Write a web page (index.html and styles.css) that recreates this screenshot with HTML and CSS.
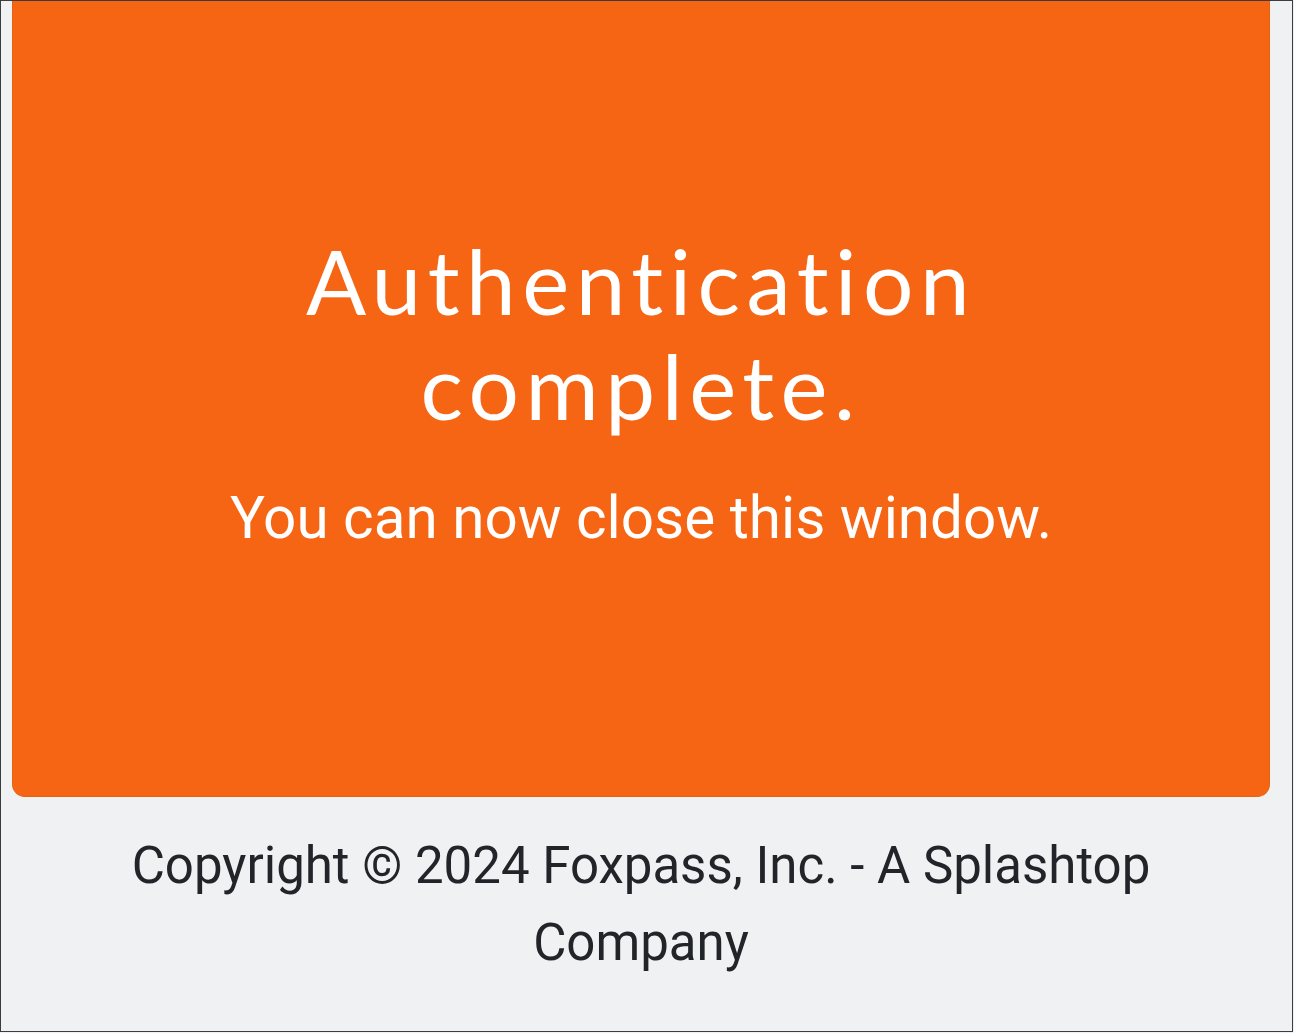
FILE: index.html
```html
<!DOCTYPE html>
<html lang="en">
<head>
<meta charset="utf-8">
<title>Authentication complete</title>
<link rel="stylesheet" href="styles.css">
</head>
<body>
<div class="frame">
  <div class="card">
    <h1 class="title">Authentication<br>complete.</h1>
    <p class="subtitle">You can now close this window.</p>
  </div>
  <footer class="footer">Copyright © 2024 Foxpass, Inc. - A Splashtop Company</footer>
</div>
</body>
</html>
```
FILE: styles.css
```css
html, body {
  margin: 0;
  padding: 0;
  background: #f0f1f3;
}
.frame {
  box-sizing: border-box;
  width: 1293px;
  height: 1032px;
  border: 1px solid #3c3c3c;
  background: #f0f1f3;
  padding: 0 22px 0 11px;
  display: flex;
  flex-direction: column;
  overflow: hidden;
}
.card {
  box-sizing: border-box;
  height: 796px;
  flex: none;
  padding-bottom: 16px;
  background: #f56513;
  border: 1px solid #e9600f;
  border-top: none;
  border-radius: 0 0 13px 13px;
  display: flex;
  flex-direction: column;
  align-items: center;
  justify-content: center;
  text-align: center;
  color: #fff;
}
.title {
  margin: 0;
  font-family: "Lato", "Open Sans", sans-serif;
  font-weight: 400;
  font-size: 89px;
  line-height: 105px;
  letter-spacing: 6.5px;
}
.subtitle {
  margin: 45px 0 0;
  font-family: "Roboto", "Liberation Sans", sans-serif;
  font-size: 58.4px;
  line-height: 70px;
}
.footer {
  margin: 30px auto 0;
  max-width: 1120px;
  text-align: center;
  font-family: "Roboto", "Liberation Sans", sans-serif;
  font-size: 51px;
  line-height: 77px;
  color: #212529;
}
```
